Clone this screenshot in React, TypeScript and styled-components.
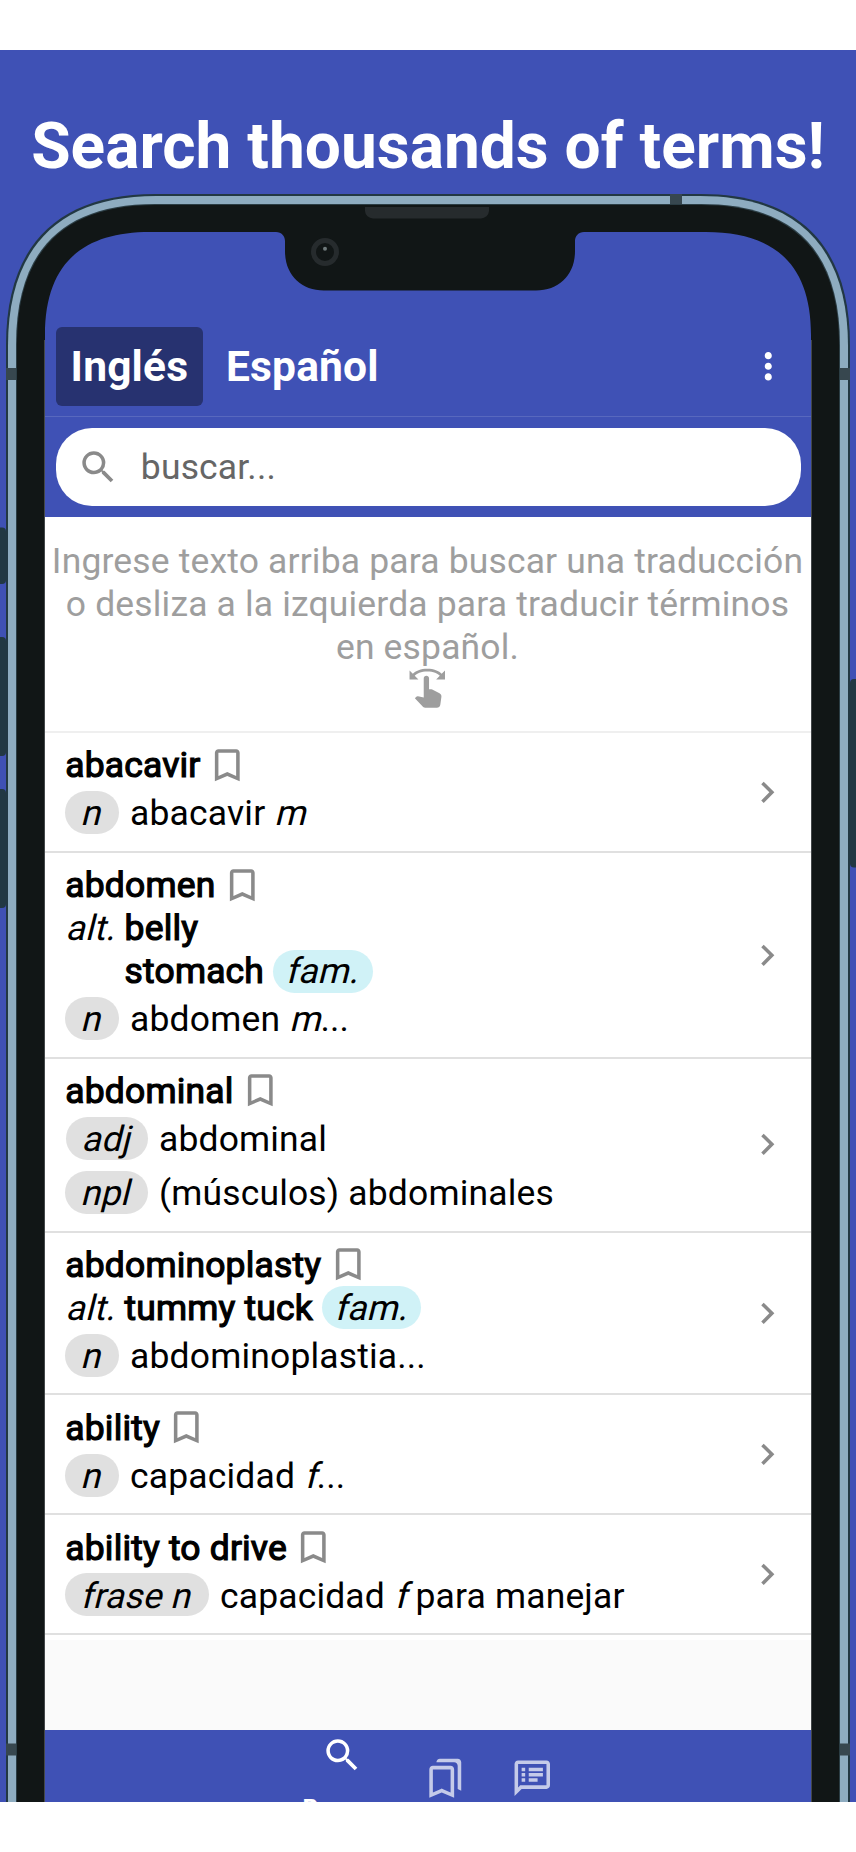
import React from 'react';
import styled, { createGlobalStyle } from 'styled-components';
import {
  MdBookmarkBorder,
  MdChevronRight,
  MdMoreVert,
  MdOutlineBookmarks,
  MdOutlineSpeakerNotes,
  MdSearch,
  MdSwipe,
} from 'react-icons/md';

const INDIGO = '#3f51b5';
const ICON = 42.55;

const GlobalStyle = createGlobalStyle`
  *, *::before, *::after { box-sizing: border-box; }
  body { margin: 0; background: #fff; font-family: Roboto, 'Liberation Sans', sans-serif; }
  svg { display: block; flex: none; }
`;

const Page = styled.div`
  height: 1852px;
  padding: 50px 0;
  background: #fff;
`;

const Poster = styled.main`
  position: relative;
  height: 1752px;
  overflow: hidden;
  background: ${INDIGO};
  display: flex;
  flex-direction: column;
`;

const Headline = styled.h1`
  margin: 0;
  height: 182px;
  padding-top: 59px;
  text-align: center;
  white-space: nowrap;
  font-size: 64px;
  line-height: 75px;
  font-weight: 700;
  color: #fff;
`;

const Device = styled.svg`
  position: absolute;
  left: 0;
  top: 0;
`;

const Screen = styled.section`
  position: relative;
  width: 766px;
  margin-left: 45px;
  flex: 1;
  display: flex;
  flex-direction: column;
  letter-spacing: 0.175px;
`;

const AppBar = styled.header`
  height: 185px;
  padding: 95px 21px 10.5px 11px;
  border-bottom: 1px solid #5868be;
  display: flex;
  align-items: stretch;
`;

const Tab = styled.button<{ $active?: boolean }>`
  border: 0;
  border-radius: 6px;
  width: ${(p) => (p.$active ? '146.7px' : '199.4px')};
  padding: 2px 0 0;
  background: ${(p) => (p.$active ? '#273270' : 'transparent')};
  color: #fff;
  font: 700 42.5px/50px Roboto, sans-serif;
  letter-spacing: 0.175px;
`;

const Kebab = styled.div`
  margin-left: auto;
  display: flex;
  align-items: center;
  color: #fff;
`;

const SearchBar = styled.div`
  height: 100px;
  padding: 10.8px 10.3px 10.7px 11px;
  background: ${INDIGO};
`;

const SearchField = styled.div`
  height: 78.5px;
  border-radius: 36px;
  background: #fff;
  display: flex;
  align-items: center;
  gap: 21px;
  padding-left: 21.3px;
  color: #8a8a8a;
`;

const Placeholder = styled.span`
  padding-top: 1.5px;
  font-size: 35.46px;
  line-height: 43px;
  color: #666;
`;

const Body = styled.div`
  flex: 1;
  background: #fafafa;
`;

const List = styled.div`
  background: #fff;
  padding-bottom: 5px;
`;

const Hint = styled.div`
  height: 214px;
  padding: 23px 1px 0 0;
  display: flex;
  flex-direction: column;
  align-items: center;
  text-align: center;
  white-space: nowrap;
  color: #9e9e9e;
  font-size: 35.46px;
  line-height: 43px;
  svg { margin-top: -2px; }
`;

const Entry = styled.article`
  border-top: 2px solid #e0e0e0;
  padding: 10.7px 22.4px 10.6px 20.3px;
  display: flex;
  align-items: center;
  justify-content: space-between;
  color: #8a8a8a;
  &:first-of-type { border-top-color: #efefef; }
  &:last-of-type { border-bottom: 2px solid #e0e0e0; }
`;

const EntryText = styled.div`
  color: #000;
  font-size: 35.46px;
  line-height: 43px;
`;

const WordLine = styled.div`
  display: flex;
  gap: 5.5px;
  svg { color: #8a8a8a; }
`;

const Strong = styled.span`
  padding-top: 0.7px;
  height: 43px;
  -webkit-text-stroke: 1.2px #000;
`;

const Slanted = styled.i`
  display: inline-block;
  font-style: normal;
  transform: skewX(-14deg);
  transform-origin: 0 34px;
`;

const AltGrid = styled.div`
  display: grid;
  grid-template-columns: 59.3px auto;
`;

const AltLine = styled.div`
  grid-column: 2;
  display: flex;
  gap: 9px;
`;

const AltLabel = styled.span`
  grid-row: 1;
  padding-top: 0.7px;
  height: 43px;
`;

const Defs = styled.div`
  display: grid;
  grid-template-columns: auto 1fr;
  column-gap: 11px;
  row-gap: 11px;
  padding: 4.4px 0 6.2px;
`;

const Definition = styled.span`
  height: 43px;
  padding-top: 1.2px;
  white-space: pre;
`;

const Pill = styled.span<{ $tone: 'grey' | 'cyan' }>`
  justify-self: end;
  height: 43px;
  border-radius: 21.5px;
  padding: ${(p) => (p.$tone === 'grey' ? '1.2px 19px 0 15px' : '0.7px 15px 0 11.7px')};
  background: ${(p) => (p.$tone === 'grey' ? '#e0e0e0' : '#d0f2f7')};
`;

const Nav = styled.nav`
  height: 72.3px;
  background: ${INDIGO};
  display: flex;
  overflow: hidden;
  color: rgba(255, 255, 255, 0.7);
`;

const NavItem = styled.div<{ $left: number; $top: number; $active?: boolean }>`
  width: ${ICON}px;
  margin-left: ${(p) => p.$left}px;
  padding-top: ${(p) => p.$top}px;
  display: flex;
  flex-direction: column;
  align-items: center;
  color: ${(p) => (p.$active ? '#fff' : 'inherit')};
`;

const NavLabel = styled.span`
  margin-top: 18px;
  font-size: 24.8px;
  line-height: 28px;
  font-weight: 700;
`;

type Alt = { term: string; tag?: string };
type Def = { pos: string; text: React.ReactNode };
type Term = { word: string; alts?: Alt[]; defs: Def[] };

const terms: Term[] = [
  { word: 'abacavir', defs: [{ pos: 'n', text: <>abacavir <Slanted>m</Slanted></> }] },
  {
    word: 'abdomen',
    alts: [{ term: 'belly' }, { term: 'stomach', tag: 'fam.' }],
    defs: [{ pos: 'n', text: <>abdomen <Slanted>m</Slanted>...</> }],
  },
  {
    word: 'abdominal',
    defs: [
      { pos: 'adj', text: 'abdominal' },
      { pos: 'npl', text: '(músculos) abdominales' },
    ],
  },
  {
    word: 'abdominoplasty',
    alts: [{ term: 'tummy tuck', tag: 'fam.' }],
    defs: [{ pos: 'n', text: 'abdominoplastia...' }],
  },
  { word: 'ability', defs: [{ pos: 'n', text: <>capacidad <Slanted>f</Slanted>...</> }] },
  {
    word: 'ability to drive',
    defs: [{ pos: 'frase n', text: <>capacidad <Slanted>f</Slanted> para manejar</> }],
  },
];

const DeviceFrame = () => (
  <Device width="856" height="1752" viewBox="0 50 856 1752">
    <g fill="#223843">
      <rect x="-4" y="527.5" width="10" height="56.5" rx="4" />
      <rect x="-4" y="637" width="10" height="119" rx="4" />
      <rect x="-4" y="789" width="10" height="119" rx="4" />
      <rect x="850" y="679" width="10" height="188.5" rx="4" />
    </g>
    <path fill="#223843" d="M6 1830V345C6 245 58 194 155 194H701C798 194 850 245 850 345V1830Z" />
    <path fill="#8eacc0" d="M8 1830V346C8 247 59 196 156 196H700C797 196 848 247 848 346V1830Z" />
    <g fill="#37474f">
      <rect x="6" y="368" width="12" height="12" />
      <rect x="838" y="368" width="12" height="12" />
      <rect x="6" y="1743.5" width="12" height="12" />
      <rect x="838" y="1743.5" width="12" height="12" />
      <rect x="670" y="194" width="12" height="12" />
    </g>
    <path fill="#2b3d44" d="M16 1830V345C16 250 63 204 155 204H701C793 204 840 250 840 345V1830Z" />
    <path fill="#111616" d="M17 1830V345C17 251 64 205 155 205H701C792 205 839 251 839 345V1830Z" />
    <path fill="#5a5e61" d="M44.300 1830V340H811.700V1830Z" />
    <path
      fill={INDIGO}
      d="M45 1830V335C45 262 84 232 150 232H276C281.500 232 285 236 285 241V251C285 275 301 290.500 324 290.500H536C559 290.500 575 275 575 251V241C575 236 578.500 232 584 232H706C772 232 811 262 811 335V1830Z"
    />
    <path fill="#262b2d" d="M365 207H489V211A8 8 0 0 1 481 218.500H373A8 8 0 0 1 365 211Z" />
    <circle cx="325" cy="252" r="11.500" fill="#111616" stroke="#262b2d" strokeWidth="5" />
    <circle cx="325" cy="248.700" r="2" fill="#6f7a7b" />
  </Device>
);

export default function App() {
  return (
    <>
      <GlobalStyle />
      <Page>
        <Poster>
          <DeviceFrame />
          <Headline>Search thousands of terms!</Headline>
          <Screen>
            <AppBar>
              <Tab $active>Inglés</Tab>
              <Tab>Español</Tab>
              <Kebab><MdMoreVert size={ICON} /></Kebab>
            </AppBar>
            <SearchBar>
              <SearchField>
                <MdSearch size={ICON} />
                <Placeholder>buscar...</Placeholder>
              </SearchField>
            </SearchBar>
            <Body>
              <List>
                <Hint>
                  <span>Ingrese texto arriba para buscar una traducción</span>
                  <span>o desliza a la izquierda para traducir términos</span>
                  <span>en español.</span>
                  <MdSwipe size={ICON} />
                </Hint>
                {terms.map((t) => (
                  <Entry key={t.word}>
                    <EntryText>
                      <WordLine>
                        <Strong>{t.word}</Strong>
                        <MdBookmarkBorder size={ICON} />
                      </WordLine>
                      {t.alts && (
                        <AltGrid>
                          <AltLabel><Slanted>alt.</Slanted></AltLabel>
                          {t.alts.map((a) => (
                            <AltLine key={a.term}>
                              <Strong>{a.term}</Strong>
                              {a.tag && <Pill $tone="cyan"><Slanted>{a.tag}</Slanted></Pill>}
                            </AltLine>
                          ))}
                        </AltGrid>
                      )}
                      <Defs>
                        {t.defs.map((d) => (
                          <React.Fragment key={d.pos}>
                            <Pill $tone="grey"><Slanted>{d.pos}</Slanted></Pill>
                            <Definition>{d.text}</Definition>
                          </React.Fragment>
                        ))}
                      </Defs>
                    </EntryText>
                    <MdChevronRight size={ICON} />
                  </Entry>
                ))}
              </List>
            </Body>
            <Nav>
              <NavItem $left={275.7} $top={4} $active>
                <MdSearch size={ICON} />
                <NavLabel>Buscar</NavLabel>
              </NavItem>
              <NavItem $left={60.9} $top={27}><MdOutlineBookmarks size={ICON} /></NavItem>
              <NavItem $left={44} $top={27}><MdOutlineSpeakerNotes size={ICON} /></NavItem>
            </Nav>
          </Screen>
        </Poster>
      </Page>
    </>
  );
}
